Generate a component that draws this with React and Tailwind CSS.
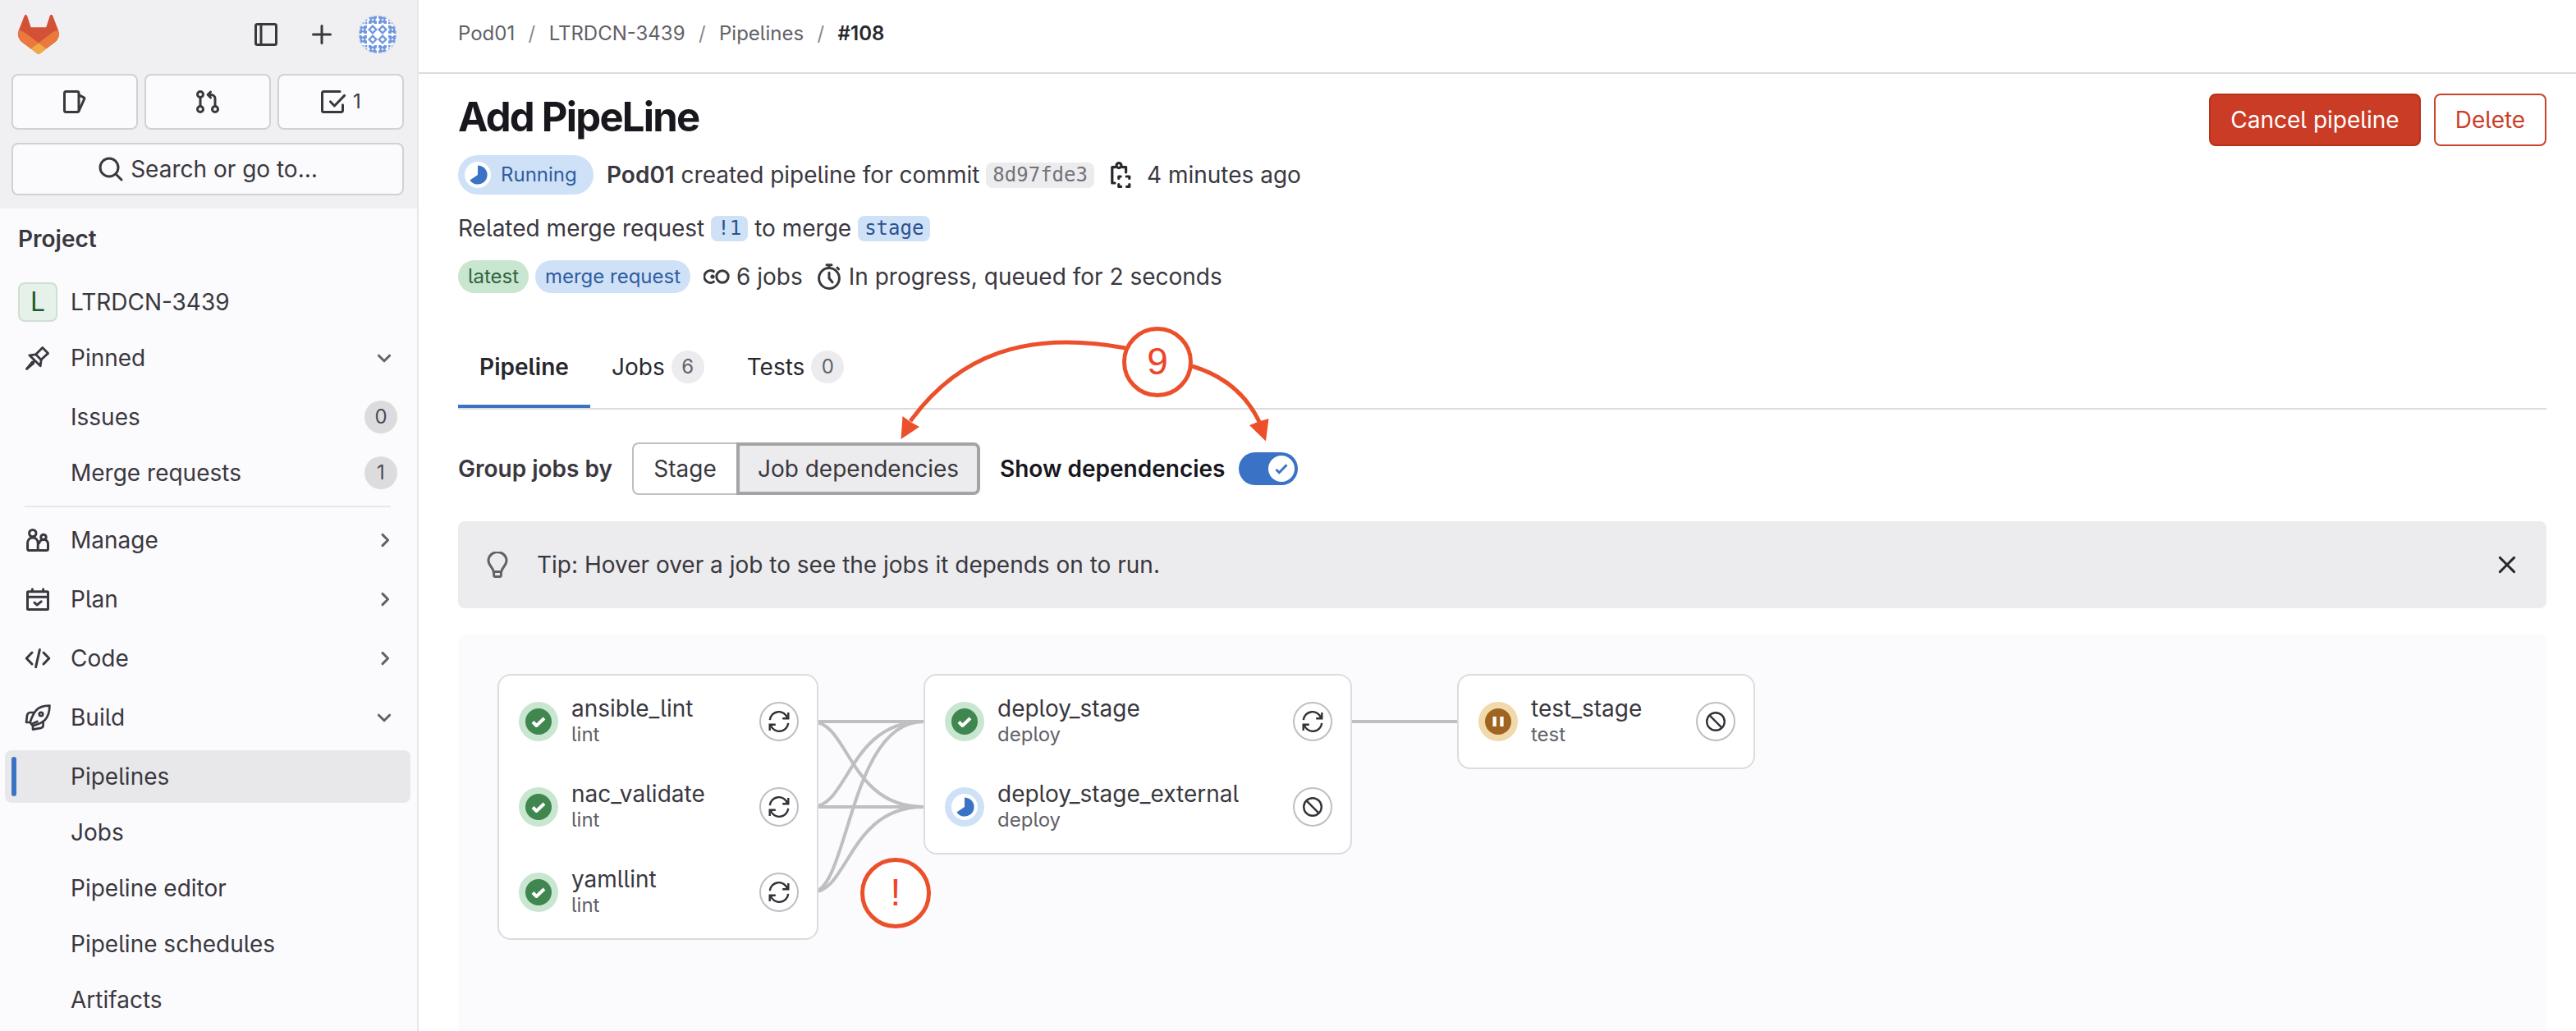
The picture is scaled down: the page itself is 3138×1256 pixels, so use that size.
import React from 'react';
import clsx from 'clsx';

/* ---------- Icons (16 unit grid) ---------- */

const Icon = ({ children, className = 'size-8', width = 1.5 }) => (
  <svg
    viewBox="0 0 16 16"
    className={clsx('shrink-0', className)}
    fill="none"
    stroke="currentColor"
    strokeWidth={width}
    strokeLinecap="round"
    strokeLinejoin="round"
  >
    {children}
  </svg>
);

const SidebarIcon = () => (
  <Icon>
    <rect x="1.75" y="1.75" width="12.5" height="12.5" rx="1" />
    <path d="M5 2v12" />
  </Icon>
);

const PlusIcon = () => (
  <Icon>
    <path d="M8 2.75v10.5M2.75 8h10.5" />
  </Icon>
);

const IssuesIcon = () => (
  <Icon>
    <rect x="1.75" y="1.75" width="8.75" height="12.5" rx="1" />
    <path d="M10.7 3.9l2.9 1.5a.6.6 0 0 1 .3.8L10.6 13.4" />
  </Icon>
);

const MergeRequestIcon = () => (
  <Icon>
    <circle cx="3.5" cy="3.5" r="1.75" />
    <circle cx="3.5" cy="12.5" r="1.75" />
    <circle cx="12.5" cy="12.5" r="1.75" />
    <path d="M3.5 5.5v5M12.5 10.5V6a2.3 2.3 0 0 0-2.3-2.3H8.4M9.75 2L8.1 3.7l1.65 1.7" />
  </Icon>
);

const TodoIcon = () => (
  <Icon>
    <path d="M12 1.75H2.1a.85.85 0 0 0-.85.85v10.8c0 .47.38.85.85.85h10.8a.85.85 0 0 0 .85-.85V9.9" />
    <path d="M6.2 7.9l2.5 2.6L14.8 4.2" />
  </Icon>
);

const SearchIcon = () => (
  <Icon>
    <circle cx="7" cy="7" r="5.5" />
    <path d="M11 11l3.5 3.5" />
  </Icon>
);

const PinIcon = () => (
  <Icon width={1.4}>
    <path d="M10.9 1.8l3.4 3.4-4.3 3.9-3.2-3.2z" />
    <path d="M6.8 5.9l-3.9.5 6.7 6.5.5-3.8M6 9.8l-4.7 4.9" />
    <path d="M4.7 10.5l-3.3 4.1 4-3.3" />
  </Icon>
);

const UsersIcon = () => (
  <Icon>
    <circle cx="4.9" cy="3.8" r="2.1" />
    <path d="M1.8 13.4V9.6a3.15 3.15 0 0 1 6.3 0v3.8c0 .5-.4.9-.9.9H2.7a.9.9 0 0 1-.9-.9z" />
    <circle cx="11.5" cy="6.2" r="1.6" />
    <path d="M8.8 9.9a2.75 2.75 0 0 1 5.45 1v2.4c0 .5-.4 1-.95 1H8.6" />
  </Icon>
);

const PlanIcon = () => (
  <Icon>
    <rect x="1.75" y="3.4" width="12.5" height="10.9" rx=".5" />
    <path d="M2 6.6h12M4.7 3.2V1.9M11.3 3.2V1.9M6 10.1l1.5 1.4 2.6-2.1" />
  </Icon>
);

const CodeIcon = () => (
  <Icon>
    <path d="M4.5 4.5L1.1 8l3.4 3.5M11.5 4.5L14.9 8l-3.4 3.5M9.2 2.7L6.8 13.3" />
  </Icon>
);

const RocketIcon = () => (
  <Icon width={1.35}>
    <path d="M15.2.8c-3.6 0-6.3.6-8.3 3C5.1 6 4.1 8.5 3.3 11l1.7 2.1c2.7-.8 5.7-1.7 7.5-3.7 2.2-2.4 2.7-5.2 2.7-8.6z" />
    <circle cx="10" cy="6" r="1.1" />
    <path d="M5.6 5h-2a2.2 2.2 0 0 0-2.1 1.7L1 11h2.2M11.3 10.6v2.1a1.7 1.7 0 0 1-1.3 1.7l-5 .9v-2.2M4.3 12l3.4-1.5" />
  </Icon>
);

const ChevronDown = () => (
  <Icon className="size-8 text-[#626168]" width={1.5}>
    <path d="M4.7 6.6L8 9.9l3.3-3.3" />
  </Icon>
);

const ChevronRight = () => (
  <Icon className="size-8 text-[#626168]" width={1.5}>
    <path d="M7 4.7L10.3 8 7 11.3" />
  </Icon>
);

const CloseIcon = () => (
  <Icon className="size-8 text-[#28272d]" width={1.5}>
    <path d="M3.7 3.7l8.6 8.6M12.3 3.7l-8.6 8.6" />
  </Icon>
);

const BulbIcon = () => (
  <Icon className="size-8 text-[#626168]">
    <path d="M5.6 12.2c0-2.3-3.1-3.6-3.1-6.7a5.5 5.2 0 0 1 11 0c0 3.1-3.1 4.4-3.1 6.7z" />
    <path d="M5.8 12.5v1.9c0 .5.4.9.9.9h2.6c.5 0 .9-.4.9-.9v-1.9" />
  </Icon>
);

const ClipboardIcon = () => (
  <Icon className="size-8 text-[#28272d]" width={1.6}>
    <circle cx="7" cy="2.3" r="1.5" />
    <path d="M4.7 3.3H2.9v9.7h1.6M9.3 3.3h2v3.2" />
    <path d="M6.9 10.2V9h1.2M11.6 9h1.8v1.2M13.4 13.8v1.4h-1.6M8.3 15.2H6.9v-1.4" />
  </Icon>
);

const PipelineIcon = () => (
  <Icon width={1.5}>
    <circle cx="11.5" cy="8" r="3.6" />
    <path d="M6.2 4.9A3.7 3.7 0 1 0 6.2 11.1" />
    <circle cx="5.5" cy="8" r="1.3" fill="currentColor" stroke="none" />
  </Icon>
);

const TimerIcon = () => (
  <Icon>
    <circle cx="8" cy="9" r="6.2" />
    <path d="M8 5.6V9l2 2.4M6.5.9h3M8 1v1.5M13 2.6l.8.8" />
  </Icon>
);

const GitLabLogo = () => (
  <svg viewBox="0 0 25 24" className="h-12 w-[50px]">
    <path
      d="m24.507 9.5-.034-.09L21.082.562a.896.896 0 0 0-1.694.091l-2.29 7.01H7.825L5.535.653a.898.898 0 0 0-1.694-.09L.451 9.411.416 9.5a6.297 6.297 0 0 0 2.09 7.278l.012.01.03.022 5.16 3.867 2.56 1.935 1.554 1.176a1.051 1.051 0 0 0 1.268 0l1.555-1.176 2.56-1.935 5.197-3.89.014-.01A6.297 6.297 0 0 0 24.507 9.5Z"
      fill="#d35136"
    />
    <path
      d="m24.507 9.5-.034-.09a11.44 11.44 0 0 0-4.56 2.051l-7.447 5.632 4.742 3.584 5.197-3.89.014-.01A6.297 6.297 0 0 0 24.507 9.5Z"
      fill="#eb783c"
    />
    <path
      d="m7.707 20.677 2.56 1.935 1.555 1.176a1.051 1.051 0 0 0 1.268 0l1.555-1.176 2.56-1.935-4.743-3.584-4.755 3.584Z"
      fill="#f0a944"
    />
    <path
      d="M5.01 11.461a11.43 11.43 0 0 0-4.56-2.05L.416 9.5a6.297 6.297 0 0 0 2.09 7.278l.012.01.03.022 5.16 3.867 4.745-3.584-7.444-5.632Z"
      fill="#eb783c"
    />
  </svg>
);

// Identicon: four diamonds in the middle, hourglass tiles on the edges
const edges = [
  [-6, -18], [6, -18], [-6, 18], [6, 18],
  [-18, -6], [-18, 6], [18, -6], [18, 6],
];
const corners = [[-16, -16], [16, -16], [-16, 16], [16, 16]];

const Avatar = () => (
  <svg viewBox="-24 -24 48 48" className="size-12">
    <clipPath id="avatar-clip">
      <circle r="23.5" />
    </clipPath>
    <g clipPath="url(#avatar-clip)">
      <circle r="23.5" fill="#fff" />
      <g fill="none" stroke="#6f98e0" strokeWidth="2.4">
        {[[-6, -6], [6, -6], [-6, 6], [6, 6]].map(([x, y]) => (
          <path key={`${x},${y}`} d={`M${x} ${y - 4.3}l4.3 4.3-4.3 4.3-4.3-4.3z`} />
        ))}
      </g>
      <g fill="#6f98e0">
        {edges.map(([x, y]) => (
          <path
            key={`${x},${y}`}
            d={`M${x - 5} ${y - 5}h3l2 2 2-2h3v3l-2 2 2 2v3h-3l-2-2-2 2h-3v-3l2-2-2-2zM${x} ${y - 1.5}l-1.5 1.5 1.5 1.5 1.5-1.5z`}
            fillRule="evenodd"
          />
        ))}
        {corners.map(([x, y]) => (
          <path
            key={`${x},${y}`}
            d={`M${x - 3} ${y - 3}h2.5v2.5h-2.5zM${x + 0.8} ${y - 3}h2.5v2.5h-2.5zM${x - 3} ${y + 0.8}h2.5v2.5h-2.5zM${x + 0.8} ${y + 0.8}h2.5v2.5h-2.5z`}
          />
        ))}
      </g>
      <circle r="23" fill="none" stroke="#dcdce4" strokeWidth="1" />
    </g>
  </svg>
);

/* ---------- Status + action icons of a job ---------- */

const PIE = 'M0-11.6A11.6 11.6 0 1 1-9.6 6.5L0 0z';

const StatusIcon = ({ status }) => (
  <svg viewBox="-24 -24 48 48" className="size-12 shrink-0">
    {status === 'success' && (
      <>
        <circle r="24" fill="#c9e6d0" />
        <circle r="16" fill="#3f864f" />
        <path d="M-7 .5l4.5 4.5L7-4" fill="none" stroke="#fff" strokeWidth="4" strokeLinejoin="round" />
      </>
    )}
    {status === 'running' && (
      <>
        <circle r="24" fill="#cfe1f7" />
        <circle r="16" fill="#fff" />
        <path d={PIE} fill="#3a72c6" />
      </>
    )}
    {status === 'manual' && (
      <>
        <circle r="24" fill="#f2d9ab" />
        <circle r="16" fill="#9e6420" />
        <path d="M-6.5-6h4.3V6h-4.3zM2.3-6h4.3V6H2.3z" fill="#fff" />
      </>
    )}
  </svg>
);

const ActionButton = ({ action }) => (
  <button className="flex size-12 shrink-0 items-center justify-center rounded-full border-2 border-[#bfbfc3] bg-white text-[#333238]">
    <svg viewBox="-13 -13 26 26" className="size-[26px]" fill="none" stroke="currentColor" strokeWidth="2.4">
      {action === 'retry' ? (
        <>
          <path d="M-11.2-1.8A11 11 0 0 1 10.3-4M11.2 1.8A11 11 0 0 1-10.3 4" />
          <path d="M11.3-11v7.2H4.2M-11.3 11V3.8h7.1" />
        </>
      ) : (
        <path d="M-10.8 0a10.8 10.8 0 1 0 21.6 0a10.8 10.8 0 1 0-21.6 0M-7.8-7.8L7.8 7.8" />
      )}
    </svg>
  </button>
);

/* ---------- Data ---------- */

const sections = [
  { label: 'Manage', icon: UsersIcon },
  { label: 'Plan', icon: PlanIcon },
  { label: 'Code', icon: CodeIcon },
  { label: 'Build', icon: RocketIcon, open: true },
];

const buildItems = ['Pipelines', 'Jobs', 'Pipeline editor', 'Pipeline schedules', 'Artifacts'];

const columns = [
  {
    width: 'w-[391px]',
    jobs: [
      { name: 'ansible_lint', stage: 'lint', status: 'success', action: 'retry' },
      { name: 'nac_validate', stage: 'lint', status: 'success', action: 'retry' },
      { name: 'yamllint', stage: 'lint', status: 'success', action: 'retry' },
    ],
  },
  {
    width: 'w-[522px]',
    jobs: [
      { name: 'deploy_stage', stage: 'deploy', status: 'success', action: 'retry' },
      { name: 'deploy_stage_external', stage: 'deploy', status: 'running', action: 'cancel' },
    ],
  },
  {
    width: 'w-[363px]',
    jobs: [{ name: 'test_stage', stage: 'test', status: 'manual', action: 'cancel' }],
  },
];

/* ---------- Sidebar ---------- */

const NavItem = ({ label, icon: NavIcon, count, active, children }) => (
  <div className={clsx('relative flex h-16 items-center rounded-lg pr-4 pl-6', active && 'bg-[#e8e8ea]')}>
    {active && <span className="absolute top-2 left-2 h-12 w-1.5 rounded-full bg-[#3a72c6]" />}
    <span className="mr-6 flex size-8 items-center">{NavIcon && <NavIcon />}</span>
    <span className="flex-1">{label}</span>
    {count !== undefined && (
      <span className="flex size-10 items-center justify-center rounded-full bg-[#dcdcde] text-[24px] text-[#4c4b51]">
        {count}
      </span>
    )}
    {children}
  </div>
);

const Sidebar = () => (
  <aside className="flex w-[510px] shrink-0 flex-col border-r-2 border-[#e7e7ec] bg-[#fbfafd]">
    <div className="h-[254px] shrink-0 bg-[#f0f0f2]">
      <div className="flex h-[90px] items-start px-[22px] pt-[18px]">
        <GitLabLogo />
        <div className="ml-auto flex items-center pr-0.5">
          <SidebarIcon />
          <span className="mr-7 ml-9 flex">
            <PlusIcon />
          </span>
          <Avatar />
        </div>
      </div>
      <div className="flex gap-2 pr-4 pl-3.5">
        <button className="flex h-[68px] flex-1 items-center justify-center rounded-lg border-2 border-[#d1d1d3] bg-[#fbfafd]">
          <IssuesIcon />
        </button>
        <button className="flex h-[68px] flex-1 items-center justify-center rounded-lg border-2 border-[#d1d1d3] bg-[#fbfafd]">
          <MergeRequestIcon />
        </button>
        <button className="flex h-[68px] flex-1 items-center justify-center gap-2 rounded-lg border-2 border-[#d1d1d3] bg-[#fbfafd] text-[24px]">
          <TodoIcon />1
        </button>
      </div>
      <div className="mt-4 pr-4 pl-3.5">
        <button className="flex h-16 w-full items-center justify-center gap-2 rounded-lg border-2 border-[#d1d1d3] bg-[#fbfafd]">
          <SearchIcon />
          Search or go to…
        </button>
      </div>
    </div>

    <nav className="flex flex-col pr-2 pl-1.5">
      <div className="flex h-[82px] items-center pb-2 pl-4 font-semibold">Project</div>
      <div className="flex h-16 items-center pl-4">
        <span className="mr-4 flex size-12 items-center justify-center rounded-lg border-2 border-[#cfdfd4] bg-[#e6f1e9] text-[32px] text-[#24592f]">
          L
        </span>
        LTRDCN-3439
      </div>
      <div className="mt-1">
        <NavItem label="Pinned" icon={PinIcon}>
          <ChevronDown />
        </NavItem>
      </div>
      <div className="mt-2 flex flex-col gap-1">
        <NavItem label="Issues" count={0} />
        <NavItem label="Merge requests" count={1} />
      </div>
      <hr className="mt-2 mr-6 ml-6 border-t-2 border-[#e7e7ef]" />
      <div className="mt-2 flex flex-col gap-2">
        {sections.map(({ label, icon, open }) => (
          <NavItem key={label} label={label} icon={icon}>
            {open ? <ChevronDown /> : <ChevronRight />}
          </NavItem>
        ))}
      </div>
      <div className="mt-2 flex flex-col gap-1">
        {buildItems.map((label, index) => (
          <NavItem key={label} label={label} active={index === 0} />
        ))}
      </div>
    </nav>
  </aside>
);

/* ---------- Main column ---------- */

const Breadcrumbs = () => (
  <div className="flex h-[90px] items-center border-b-2 border-[#dcdcde] pb-1.5 pl-12 text-[24px] text-[#626168]">
    <span>Pod01</span>
    <span className="mx-[16.4px] text-[#89888d]">/</span>
    <span>LTRDCN-3439</span>
    <span className="mx-[16.4px] text-[#89888d]">/</span>
    <span>Pipelines</span>
    <span className="mx-[16.4px] text-[#89888d]">/</span>
    <span className="font-semibold text-[#28272d]">#108</span>
  </div>
);

const PipelineHeader = () => (
  <div className="flex items-start">
    <div>
      <h1 className="h-14 text-[49px] leading-[58px] font-bold tracking-[-0.036em] text-[#18171d]">Add PipeLine</h1>

      <div className="mt-[19px] flex h-12 items-center">
        <span className="mr-4 flex h-12 w-[165px] items-center rounded-full bg-[#cfe1f7] pl-2 text-[24px] text-[#2f5ca0]">
          <svg viewBox="-16 -16 32 32" className="mr-3 size-8">
            <circle r="16" fill="#fff" />
            <path d={PIE} fill="#3a72c6" />
          </svg>
          Running
        </span>
        <span>
          <b className="font-semibold">Pod01</b> created pipeline for commit
        </span>
        <code className="mr-4 ml-2 rounded-lg bg-[#ececee] px-2 font-['DejaVu_Sans_Mono',monospace] text-[24px] leading-[31px] text-[#737278]">
          8d97fde3
        </code>
        <ClipboardIcon />
        <span className="ml-4">4 minutes ago</span>
      </div>

      <div className="mt-6 flex h-[34px] items-center">
        Related merge request
        <code className="mx-2 rounded-lg bg-[#cfe1f7] px-2 font-['DejaVu_Sans_Mono',monospace] text-[24px] leading-[31px] text-[#2a5290]">
          !1
        </code>
        to merge
        <code className="mx-2 rounded-lg bg-[#cfe1f7] px-2 font-['DejaVu_Sans_Mono',monospace] text-[24px] leading-[31px] text-[#2a5290]">
          stage
        </code>
      </div>

      <div className="mt-[22px] flex h-10 items-center">
        <span className="flex h-10 w-[86px] items-center justify-center rounded-full bg-[#c9e6d0] text-[24px] text-[#306440]">
          latest
        </span>
        <span className="mr-4 ml-2 flex h-10 w-[189px] items-center justify-center rounded-full bg-[#cfe1f7] text-[24px] text-[#2f5ca0]">
          merge request
        </span>
        <PipelineIcon />
        <span className="mr-4 ml-2">6 jobs</span>
        <TimerIcon />
        <span className="ml-2">In progress, queued for 2 seconds</span>
      </div>
    </div>

    <div className="ml-auto flex gap-4">
      <button className="h-16 w-[258px] rounded-lg border-2 border-[#b8321a] bg-[#ca3c25] text-white">
        Cancel pipeline
      </button>
      <button className="h-16 w-[137px] rounded-lg border-2 border-[#ca4227] bg-white text-[#c9402a]">Delete</button>
    </div>
  </div>
);

const Tabs = () => (
  <div className="mt-10 flex h-[102px] border-b-2 border-[#dcdcde] text-[#28272d]">
    <div className="flex w-[161px] items-center justify-center font-semibold shadow-[inset_0_-4px_0_#3a72c6]">
      Pipeline
    </div>
    {[
      ['Jobs', 6],
      ['Tests', 0],
    ].map(([label, count]) => (
      <div key={label} className="flex items-center px-[26px]">
        {label}
        <span className="ml-2 flex size-10 items-center justify-center rounded-full bg-[#ececee] text-[24px] text-[#626168]">
          {count}
        </span>
      </div>
    ))}
  </div>
);

const GraphControls = () => (
  <div className="mt-10 flex h-16 items-center">
    <span className="w-[212px] font-semibold">Group jobs by</span>
    <button className="h-16 w-[127px] rounded-l-lg border-2 border-r-0 border-[#bfbfc3] bg-white">Stage</button>
    <button className="h-16 w-[297px] rounded-r-lg border-4 border-[#a4a3a6] bg-[#ececee]">Job dependencies</button>
    <span className="ml-6 font-semibold text-[#18171d]">Show dependencies</span>
    <span className="ml-[17px] flex h-10 w-[72px] items-center justify-end rounded-full bg-[#3a72c6] pr-1">
      <span className="flex size-8 items-center justify-center rounded-full bg-white text-[#3a72c6]">
        <svg viewBox="0 0 16 16" className="size-4" fill="none" stroke="currentColor" strokeWidth="3">
          <path d="M1.5 9l3.8 3.7L14.5 3.2" />
        </svg>
      </span>
    </span>
  </div>
);

const Tip = () => (
  <div className="mt-8 flex h-[106px] items-center rounded-lg bg-[#ececee] px-8">
    <BulbIcon />
    <span className="ml-8 flex-1">Tip: Hover over a job to see the jobs it depends on to run.</span>
    <CloseIcon />
  </div>
);

// Links leave a job horizontally and bend at one third of the way
const link = (y1, y2) => `M383 ${y1}C428 ${y1} 428 ${y2} 519 ${y2}`;
const row = [58, 162, 266];

const PipelineGraph = () => (
  <div className="mt-8 flex-1 rounded-t-lg bg-[#fbfafd] px-12 pt-12">
    <div className="relative flex items-start gap-32">
      <svg className="absolute inset-0 h-[324px] w-[1532px]" fill="none" stroke="#bfbfc3" strokeWidth="4">
        <path d={link(row[0], row[0])} />
        <path d={link(row[0], row[1])} />
        <path d={link(row[1], row[0])} />
        <path d={link(row[1], row[1])} />
        <path d={link(row[2], row[0])} />
        <path d={link(row[2], row[1])} />
        <path d="M1033 58h140" />
      </svg>
      {columns.map(({ width, jobs }) => (
        <div key={width} className={clsx('relative rounded-2xl border-2 border-[#dcdcde] bg-white py-1', width)}>
          {jobs.map((job) => (
            <div key={job.name} className="flex h-[104px] items-center pr-[22px] pl-6">
              <StatusIcon status={job.status} />
              <div className="ml-4 flex-1">
                <p className="leading-8">{job.name}</p>
                <p className="text-[24px] leading-8 text-[#626168]">{job.stage}</p>
              </div>
              <ActionButton action={job.action} />
            </div>
          ))}
        </div>
      ))}
    </div>
  </div>
);

/* ---------- Numbered callouts over the page ---------- */

const Callouts = () => (
  <>
    <svg className="pointer-events-none absolute top-0 left-0 h-[1256px] w-[3138px]" fill="none" stroke="#eb502b" strokeWidth="5">
      <path d="M1371 424C1250 402 1168 432 1109 513" />
      <path d="M1452 446C1492 458 1518 480 1534 514" />
      <path d="M1097.5 535l2-28 10.5 7.5L1120 520z" fill="#eb502b" stroke="none" />
      <path d="M1542 537.5L1522 518l11.5-4.500 12-3.500z" fill="#eb502b" stroke="none" />
    </svg>
    <div className="absolute top-[398px] left-[1367px] flex size-[86px] items-center justify-center rounded-full border-5 border-[#eb502b] bg-white pb-[3px] font-['Liberation_Sans',sans-serif] text-[46px] text-[#ee4427]">
      9
    </div>
    <div className="absolute top-[1045px] left-[1048px] flex size-[86px] items-center justify-center rounded-full border-5 border-[#eb502b] bg-white pb-[3px] font-['Liberation_Sans',sans-serif] text-[46px] text-[#ee4427]">
      !
    </div>
  </>
);

const App = () => (
  <div className="relative flex h-[1256px] w-[3138px] overflow-hidden bg-white font-['Inter',sans-serif] text-[28px] leading-10 text-[#3a383f] [font-feature-settings:'cv05']">
    <Sidebar />
    <main className="flex min-w-0 flex-1 flex-col">
      <Breadcrumbs />
      <div className="flex flex-1 flex-col pt-6 pr-9 pl-12">
        <PipelineHeader />
        <Tabs />
        <GraphControls />
        <Tip />
        <PipelineGraph />
      </div>
    </main>
    <Callouts />
  </div>
);

export default App;
